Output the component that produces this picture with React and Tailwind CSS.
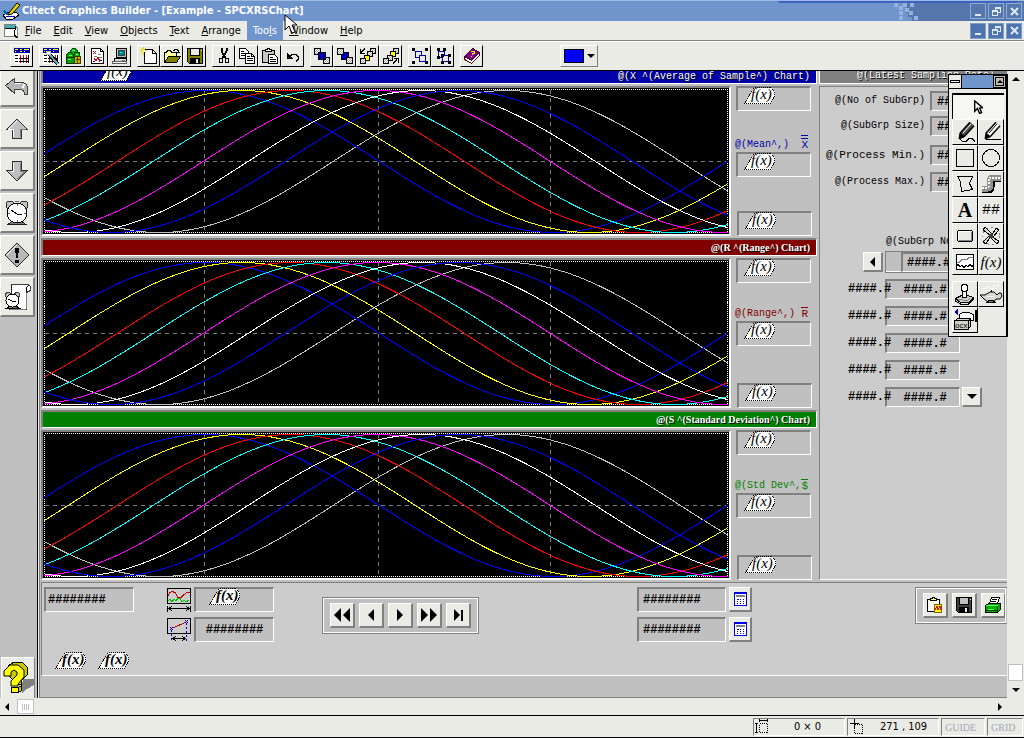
import React from "react";

const mono = "font-['Liberation_Mono',monospace]";
const ui = "font-['DejaVu_Sans_Condensed','DejaVu_Sans',sans-serif]";

const Icon = ({ w = 18, h = 18, children }) => (
  <svg
    width={w}
    height={h}
    viewBox={`0 0 ${w} ${h}`}
    shapeRendering="crispEdges"
    fill="none"
    stroke="#000"
    className="shrink-0"
    aria-hidden="true"
  >
    {children}
  </svg>
);

/* ---------- toolbar icons ---------- */

const TableIcon = ({ wrench }) => (
  <Icon>
    <rect x="1" y="1" width="16" height="16" fill="#fff" stroke="none" />
    <rect x="1" y="1" width="16" height="5" fill="#0000a8" stroke="none" />
    <path d="M2 2.5h3M7 2.5h2M7 4.5h2M11 2.5h5M2 4.5h1M11 4.5h1" stroke="#ff0" />
    <path d="M2 8.5h3M2 11.5h3M2 14.5h3" stroke="#000" />
    <path d="M7.500 8v8M10.500 8v8M13.500 8v8" stroke="#f00000" />
    <path d="M6 11.5h10M6 14.5h10M15.500 8v8" stroke="#000" />
    {wrench && (
      <>
        <path d="M7 7l9 10" stroke="#000" strokeWidth="4" />
        <path d="M7 7l9 10" stroke="#5fa8b8" strokeWidth="2" />
        <path d="M4.500 4.500h4v3h-4z" fill="#fff" stroke="#c0c0c0" />
      </>
    )}
  </Icon>
);

const SymbolsIcon = () => (
  <Icon>
    <circle cx="9" cy="5" r="3.5" fill="#00b000" stroke="#004000" />
    <circle cx="5" cy="9" r="3.5" fill="#00a000" stroke="#004000" />
    <circle cx="12" cy="8" r="3" fill="#00c000" stroke="#004000" />
    <path d="M1.5 10.5h8v6h-8z" fill="#00a000" stroke="#003000" />
    <path d="M9.5 9.5h6v7h-6z" fill="#c8b400" stroke="#403800" />
    <path d="M11 12.5h4M12.5 10v6" stroke="#404000" />
    <path d="M7 3.5h3M4 8.5h3M3 12.5h3M11 7.5h2" stroke="#60ff60" />
  </Icon>
);

const ReportIcon = () => (
  <Icon>
    <path d="M3.5 1.5h9l3 3v12h-12z" fill="#fff" />
    <path d="M12.5 1.5v3h3" />
    <path d="M5 4l3 3M8 4l-3 3" stroke="#e00000" />
    <path d="M10 7.5h3M6 9.5h3M11 10.5h3" stroke="#808080" />
    <path d="M6 11l2 3 2-4 2 5" stroke="#e00000" />
    <path d="M5 14.5h2M12 13.5h2" stroke="#0000a8" />
  </Icon>
);

const ComputerIcon = () => (
  <Icon>
    <path d="M5.5 1.5h10v9h-10z" fill="#c0c0c0" />
    <rect x="7.500" y="3.500" width="6" height="5" fill="#008080" stroke="#404040" />
    <path d="M9 5.5h2" stroke="#0ff" />
    <path d="M3.5 11.5h12v3h-12z" fill="#d8d8d8" />
    <path d="M1.5 14.5h14v2h-14z" fill="#fff" stroke="#606060" />
    <path d="M11 13h3" stroke="#808080" />
  </Icon>
);

const NewIcon = () => (
  <Icon>
    <path d="M4.5 2.5h8l4 4v10h-12z" fill="#fff" />
    <path d="M12.5 2.5v4h4" />
    <path d="M3.5 0v8M0 3.5h7M1 1l5 5M6 1l-5 5" stroke="#e8d800" />
    <path d="M3 3h1v1h-1z" stroke="#fff" />
  </Icon>
);

const OpenIcon = () => (
  <Icon>
    <path d="M1.5 14.5v-9h2l1-2h3l1 2h5v4" fill="#ffffa0" />
    <path d="M1.5 15.5l4-6h12l-4 6z" fill="#808000" />
    <path d="M10 3.5h1v-1h3v1h1v2M13 5.5h4M15.5 6v-2" />
  </Icon>
);

const SaveIcon = ({ body = "#808000" }) => (
  <Icon>
    <path d="M1.5 1.5h15v15h-13l-2-2z" fill={body} />
    <rect x="4.5" y="1.5" width="9" height="7" fill={body === "#808000" ? "#ebebe5" : "#c0c0c0"} />
    <rect x="4.5" y="11.5" width="9" height="5" fill="#000" />
    <rect x="10" y="12" width="2" height="4" fill="#ebebe5" stroke="none" />
    <path d="M14.5 3.5h1" stroke="#fff" />
  </Icon>
);

const CutIcon = () => (
  <Icon>
    <path d="M6.500 1v3l1 2 1 2 2 3M11.500 1v3l-1 2-1 2-2 3" strokeWidth="2" />
    <rect x="4.5" y="11.5" width="3" height="4" rx="1" />
    <rect x="10.5" y="11.5" width="3" height="4" rx="1" />
  </Icon>
);

const CopyIcon = () => (
  <Icon>
    <path d="M1.5 1.5h6l3 3v7h-9z" fill="#fff" />
    <path d="M3 4.5h3M3 6.5h5M3 8.5h5" />
    <path d="M7.5 6.5h6l3 3v7h-9z" fill="#fff" />
    <path d="M13.5 6.5v3h3M9 9.5h3M9 11.5h6M9 13.5h6" />
  </Icon>
);

const PasteIcon = () => (
  <Icon>
    <path d="M1.5 3.5h12v12h-12z" fill="#c8c8c0" />
    <path d="M4.5 4.5v-2h2v-1h2v1h2v2z" fill="#fff" />
    <path d="M7.5 7.5h6l3 3v6h-9z" fill="#fff" />
    <path d="M9 10.5h3M9 12.5h6M9 14.5h6" />
  </Icon>
);

const UndoIcon = () => (
  <Icon>
    <path d="M3 6v6h6z" fill="#000" stroke="none" />
    <path d="M6 9.500l2-2h4l2 2v3l-2 2" />
  </Icon>
);

const checker = (
  <defs>
    <pattern id="dither" width="2" height="2" patternUnits="userSpaceOnUse">
      <rect width="2" height="2" fill="#fff" stroke="none" />
      <path d="M0 0h1v1H0zM1 1h1v1H1z" fill="#a8a8a8" stroke="none" />
    </pattern>
  </defs>
);

const FrontIcon = ({ back }) => (
  <Icon>
    {checker}
    {back && <rect x="5.5" y="5.5" width="7" height="7" fill="#0000c0" />}
    <rect x="1.5" y="1.5" width="6" height="6" fill="url(#dither)" />
    <rect x="10.5" y="10.5" width="6" height="6" fill="url(#dither)" />
    {!back && <rect x="5.5" y="5.5" width="7" height="7" fill="#0000c0" />}
  </Icon>
);

const StepIcon = ({ forward }) => (
  <Icon>
    <rect x="11.5" y="1.5" width="5" height="5" fill="url(#dither)" />
    <rect x="8.5" y="4.5" width="5" height="5" fill={forward ? "#ff0" : "url(#dither)"} />
    <rect x="5.5" y="8.5" width="5" height="5" fill={forward ? "url(#dither)" : "#ff0"} />
    <rect x="1.5" y="11.5" width="5" height="5" fill="url(#dither)" />
    {forward ? (
      <path d="M11 16.5l4-4M12 11.5h4v4" />
    ) : (
      <path d="M6 1.5l-4 4M1.5 2v4h4" />
    )}
  </Icon>
);

const GroupIcon = ({ split }) => (
  <Icon>
    <path d="M4.5 4.5h6v6h-6z" stroke="#0000a0" />
    <path d="M8.5 8.5h6v6h-6z" stroke="#0000a0" fill="#ebebe5" />
    {split ? (
      <path
        d="M3 1h3v3H3zM9 1h3v3H9zM3 9h3v3H3zM14 7h3v3h-3zM7 14h3v3H7zM14 14h3v3h-3zM7 7h3v3H7z"
        fill="#000"
        stroke="none"
      />
    ) : (
      <path
        d="M1 1h3v3H1zM14 1h3v3h-3zM1 14h3v3H1zM14 14h3v3h-3z"
        fill="#000"
        stroke="none"
      />
    )}
  </Icon>
);

const BookIcon = () => (
  <Icon>
    <path d="M1.5 9.5v3l7 4 8-8v-3l-8 8z" fill="#fff" stroke="#600000" />
    <path d="M1.5 9.5l8-8 7 4-8 8z" fill="#800080" stroke="#400040" />
    <path d="M8 4.500h3v2h-2v1M8.500 9v1" stroke="#ff0" />
  </Icon>
);

/* ---------- left bar icons ---------- */

const BackIcon = () => (
  <Icon w={26} h={22}>
    <path
      d="M1.500 10.500l9-7v4h7q6 0 6 6v6h-3q0-5-5-5h-5v4z"
      fill="#b8b8b8"
      stroke="#404040"
    />
    <path d="M11 8.500h6" stroke="#fff" />
    <path d="M19 13l1-4" stroke="#fff" strokeWidth="2" />
  </Icon>
);

const ArrowIcon = ({ down }) => (
  <Icon w={26} h={24}>
    {down ? (
      <path d="M8.5 2.5h9v9h6l-10.500 10.500l-10.500-10.500h6z" fill="#c0c0c0" stroke="#303030" />
    ) : (
      <path d="M13 2l10.500 10.500h-6v9h-9v-9h-6z" fill="#c0c0c0" stroke="#303030" />
    )}
    <path d={down ? "M9.5 4v8h-3" : "M13 4l-8 8h4v8"} stroke="#fff" />
    <path d={down ? "M16.5 4v8h5l-8 8" : "M16.5 20v-8h5"} stroke="#808080" />
  </Icon>
);

const ClockIcon = () => (
  <Icon w={26} h={26}>
    <circle cx="6" cy="5" r="4" fill="#c0c0c0" stroke="#303030" />
    <circle cx="20" cy="5" r="4" fill="#c0c0c0" stroke="#303030" />
    <path d="M4 24.500l4-3h10l4 3z" fill="#808080" stroke="#202020" />
    <circle cx="13" cy="13" r="10" fill="#fff" stroke="#000" />
    <path d="M7 10l6 4h5" />
    <path d="M13 4v2M13 20v2M4 13h2M20 13h2M11 1h4" stroke="#606060" />
  </Icon>
);

const AlertIcon = () => (
  <Icon w={26} h={26}>
    <path d="M13 1l12 12-12 12L1 13z" fill="#b8b8b8" stroke="#303030" />
    <path d="M13 3L3 13" stroke="#fff" />
    <path d="M11 6h4l-1 10h-2zM11 18h4v3h-4z" fill="#000" stroke="none" />
  </Icon>
);

const AlarmPageIcon = () => (
  <Icon w={28} h={28}>
    <path d="M8.5 1.5h17l2 2v4l-4 2v17h-17v-3h2z" fill="#fff" stroke="#404040" />
    <path d="M8.5 2v24" strokeDasharray="1 1" />
    <path d="M23.500 9v-4l2-3" />
    <path d="M7 26.500h16M23.500 10v16" stroke="#808080" />
    <circle cx="5" cy="12" r="2.500" fill="#c0c0c0" stroke="#404040" />
    <circle cx="14" cy="12" r="2.500" fill="#c0c0c0" stroke="#404040" />
    <path d="M4 25l3-2h6l3 2z" fill="#808080" />
    <circle cx="9.500" cy="17.500" r="6.500" fill="#fff" />
    <path d="M5 16l4 2h4" />
  </Icon>
);

const HelpIcon = () => (
  <Icon w={32} h={34}>
    <path d="M21 18h11v6l-7 4-5 4v-8z" fill="#808080" stroke="none" />
    <path d="M6 5l6-4h8l5 5v8l-6 6v3h-4l-9-9z" fill="#c8c800" />
    <path
      d="M2 15v-5l6-6h8l6 5v7l-6 7v2h-7v-5l6-6v-3l-3-2-3 2v4z"
      fill="#ffff00"
      shapeRendering="auto"
    />
    <path d="M9.500 26.500h7v5h-7z" fill="#ffff00" />
    <path d="M16.500 26.500l3-2v5l-3 2z" fill="#c8c800" />
  </Icon>
);

/* ---------- palette icons ---------- */

const Pencil = ({ dark }) => (
  <>
    <path d="M8 14L18 3" stroke="#000" strokeWidth="7" shapeRendering="auto" />
    <path
      d="M8.500 13.500L18 3"
      stroke={dark ? "#505050" : "#fff"}
      strokeWidth="4"
      shapeRendering="auto"
    />
    <path d="M9 12L17 3" stroke={dark ? "#fff" : "#000"} shapeRendering="auto" />
    <path d="M5 18l1-6 4 4z" fill="#000" shapeRendering="auto" />
  </>
);

const FreehandIcon = () => (
  <Icon w={22} h={22}>
    <Pencil dark />
    <path d="M6 18.500l3 2h3l3-3h3l3 3" />
  </Icon>
);

const LineIcon = () => (
  <Icon w={22} h={22}>
    <Pencil />
    <path d="M6 18.500h15" />
  </Icon>
);

const RectIcon = () => (
  <Icon w={22} h={22}>
    <path d="M2.500 2.500h17v17h-17z" />
  </Icon>
);

const EllipseIcon = () => (
  <Icon w={22} h={22}>
    <circle cx="11" cy="11" r="8.500" />
  </Icon>
);

const PolygonIcon = () => (
  <Icon w={22} h={22}>
    <path d="M3.500 3.500h15l-3 7 3 6-11 2-1-10z" />
  </Icon>
);

const PipeIcon = () => (
  <Icon w={22} h={22}>
    <path d="M2 16.500h7q2 0 2-3v-5q0-3 3-3h7" stroke="#000" strokeWidth="7" />
    <path d="M2 15.500h6q2 0 2-3v-5q0-3 3-3h8" stroke="#909090" strokeWidth="6" />
    <path d="M2 14.500h5q2 0 2-3v-4q0-3 3-3h9" stroke="#fff" strokeWidth="2" strokeDasharray="2 1" />
  </Icon>
);

const ButtonIcon = () => (
  <Icon w={22} h={22}>
    <rect x="3.500" y="5.500" width="15" height="11" rx="2" fill="#ebebe5" />
    <path d="M5 15.500h13M17.500 7v8" stroke="#808080" />
    <path d="M5 6.500h12M4.500 7v8" stroke="#fff" />
  </Icon>
);

const FanIcon = () => (
  <Icon w={22} h={22}>
    <circle cx="11" cy="11" r="8.500" stroke="#808080" strokeDasharray="2 3" />
    <g fill="#dcdcd6">
      <path d="M10 10L3 5l2-3 7 7zM12 10l4-7 3 2-6 7zM12 12l7 4-2 3-6-6zM10 12l-4 7-3-2 6-6z" />
    </g>
    <rect x="9" y="9" width="4" height="4" fill="#404040" stroke="none" />
  </Icon>
);

const TrendIcon = () => (
  <Icon w={22} h={22}>
    <rect x="2.500" y="3.500" width="17" height="15" fill="#fff" />
    <path d="M3 11.500h2l3-3h5l2-2h4" stroke="#808080" />
    <path d="M3 14.500l1-1 2 2 2-1 2 2 2-2 2 1 2-2 2 2 1-1" />
  </Icon>
);

const StampIcon = () => (
  <Icon w={22} h={22}>
    <path d="M1.500 15.500l6-3h6l6 2-5 5h-8z" fill="#d0d0c8" />
    <path d="M1.500 16v2l5 3h8l5-5v-2" />
    <path d="M8.500 7.500h4v7h-4z" fill="#fff" />
    <circle cx="10.500" cy="5" r="3.500" fill="#fff" />
    <path d="M5 16.500l8 1 3-2" stroke="#808080" />
  </Icon>
);

const LampIcon = () => (
  <Icon w={24} h={22}>
    <path d="M4 5.500h3v-2h4v2h3v-3h6M13 5.500h6" stroke="#fff" strokeDasharray="2 1" />
    <path
      d="M1 12l5 0 5-3h4l3 3 2-2h2l1 3-2 3h-4l-2 3h-6l-4-3z"
      fill="#d8d8d0"
      shapeRendering="auto"
    />
    <path d="M8 19.500h8l-2-2h-4z" fill="#808080" />
    <path d="M8 13.500h7" stroke="#fff" />
    <path d="M12.500 7v2" />
  </Icon>
);

const OcxIcon = () => (
  <Icon w={24} h={24}>
    <path d="M5 1v7L1 4z" fill="#0000c0" stroke="none" />
    <path d="M6.500 6.500l3-2h6l5 2v6h-4l-5-2-5 1z" fill="#fff" />
    <path d="M22.500 2v12" strokeWidth="2" />
    <path d="M1.500 13.500l3-3h13l-3 3M14.500 21.500l3-3v-8" fill="#d0d0c8" />
    <path d="M1.500 12.500h14v9h-14z" fill="#d0d0c8" />
    <text
      x="2"
      y="20"
      fontSize="8"
      fill="#000"
      stroke="none"
      fontFamily="Liberation Sans, sans-serif"
    >
      ocx
    </text>
  </Icon>
);

const Fx = () => (
  <svg width="32" height="17" viewBox="0 0 32 17" className="block shrink-0" role="img" aria-label="f(x)">
    <path
      d="M10.500 .5h16l4 4v5l-4 7H.5l3-5z"
      fill="#fff"
      stroke="#000"
      strokeDasharray="1 1"
      shapeRendering="crispEdges"
    />
    <text
      x="7"
      y="12"
      fontSize="15"
      fontStyle="italic"
      fontFamily="Liberation Serif, serif"
    >
      f(x)
    </text>
  </svg>
);

const Tri = ({ dir = "left", size = 5 }) => {
  const d = {
    left: "M7 0v14L0 7z",
    right: "M0 0v14l7-7z",
    up: "M0 7h14L7 0z",
    down: "M0 0h14L7 7z",
  }[dir];
  const side = dir === "left" || dir === "right";
  return (
    <svg
      width={side ? size : size * 2}
      height={side ? size * 2 : size}
      viewBox={side ? "0 0 7 14" : "0 0 14 7"}
      aria-hidden="true"
    >
      <path d={d} />
    </svg>
  );
};

/* ---------- window chrome ---------- */

const WindowGlyph = ({ kind }) => (
  <svg width="11" height="11" viewBox="0 0 11 11" fill="none" stroke="#dfe9f7" shapeRendering="crispEdges" aria-hidden="true">
    {kind === "Minimize" && <path d="M2 9h6" strokeWidth="2" />}
    {kind === "Restore" && <path d="M4.500 4V1.500h5v5H7M4 2.500h6M1.500 4.500h5v5h-5zM1 5.500h6" />}
    {kind === "Close" && <path d="M2 2l7 7M9 2L2 9" strokeWidth="2" shapeRendering="auto" />}
  </svg>
);

const WindowButtons = ({ solid }) => (
  <div className="flex gap-[2px]">
    {["Minimize", "Restore", "Close"].map((kind) => (
      <button
        key={kind}
        aria-label={kind}
        className={`flex size-4 items-center justify-center border ${
          solid ? "border-[#7d9ccc] bg-[#4f74ad]" : "border-[#8fabd8]"
        }`}
      >
        <WindowGlyph kind={kind} />
      </button>
    ))}
  </div>
);

const TitleBar = () => (
  <header className="relative flex h-[21px] shrink-0 items-center overflow-hidden border-t border-[#9db9e4] bg-[#7095cc] text-white">
    <div className="px-[2px]">
      <Icon w={18} h={18}>
        <path d="M1 13l5-3 9 1 2 2-6 4H4z" fill="#fff" />
        <path d="M4 14h9" stroke="#0000c0" />
        <path d="M7 11l8-10 3 2-8 9-4 1z" fill="#f0d800" shapeRendering="auto" />
        <path d="M2 9l4 4" stroke="#0060a0" strokeWidth="2" />
      </Icon>
    </div>
    <h1 className={`${ui} flex-1 text-[11px] font-bold whitespace-nowrap`}>
      Citect Graphics Builder - [Example - SPCXRSChart]
    </h1>
    <svg width="24" height="20" viewBox="0 0 24 20" className="shrink-0" aria-hidden="true">
      <path d="M12 0h12v20h-6v-4h-4v-4h-2z" fill="#5577ac" />
      <path
        d="M0 2h4v4H0zM5 5h4v4H5zM9 2h4v4H9zM16 2h4v4h-4zM5 10h4v4H5zM15 10h4v4h-4zM5 15h4v4H5zM11 7h4v4h-4zM20 15h4v4h-4z"
        fill="#95b2de"
      />
    </svg>
    <div className="flex h-full items-center bg-[#5577ac] pr-[2px] pl-[52px]">
      <WindowButtons />
    </div>
    <div className="absolute -top-[3px] right-[5px] h-[5px] w-[242px] rounded-b-sm border-b-2 border-[#3c63c0] bg-[#6f9cf0]" />
  </header>
);

const menus = [
  ["", "F", "ile"],
  ["", "E", "dit"],
  ["", "V", "iew"],
  ["", "O", "bjects"],
  ["", "T", "ext"],
  ["", "A", "rrange"],
  ["Too", "l", "s"],
  ["", "W", "indow"],
  ["", "H", "elp"],
];

const MenuBar = () => (
  <nav className="flex h-5 shrink-0 items-center border-b border-[#808080] pr-[2px] pl-[3px]">
    <Icon w={16} h={16}>
      <path d="M1.500 1.500h11v2l2 1v10l-4-1h-9z" fill="#fff" stroke="#808080" />
      <path d="M2 2h11v3H2z" fill="#40b0b0" stroke="none" />
      <path d="M12.500 3l-1 9 3 3M2 5.500h10" />
    </Icon>
    <div className="flex flex-1">
      {menus.map(([pre, key, post]) => (
        <button
          key={key + post}
          className={`${ui} h-[19px] px-[6px] text-[11px] leading-[19px] ${
            pre ? "bg-[#7095cc] text-white" : ""
          }`}
        >
          {pre}
          <u>{key}</u>
          {post}
        </button>
      ))}
    </div>
    <WindowButtons solid />
  </nav>
);

const toolGroups = [
  [["Template", <TableIcon />]],
  [
    ["Properties", <TableIcon wrench />],
    ["Symbols", <SymbolsIcon />],
    ["Reports", <ReportIcon />],
    ["Runtime", <ComputerIcon />],
  ],
  [
    ["New", <NewIcon />],
    ["Open", <OpenIcon />],
    ["Save", <SaveIcon />],
  ],
  [
    ["Cut", <CutIcon />],
    ["Copy", <CopyIcon />],
    ["Paste", <PasteIcon />],
    ["Undo", <UndoIcon />],
  ],
  [
    ["Bring to front", <FrontIcon />],
    ["Send to back", <FrontIcon back />],
    ["Send backwards", <StepIcon />],
    ["Bring forwards", <StepIcon forward />],
  ],
  [
    ["Group", <GroupIcon />],
    ["Ungroup", <GroupIcon split />],
  ],
  [["Help book", <BookIcon />]],
];

const ToolBar = () => (
  <div className="flex shrink-0 items-center border-t border-b border-t-white border-b-black py-[3px] pl-[10px]">
    <div className="flex gap-[6px]">
      {toolGroups.map((group) => (
        <div key={group[0][0]} className="flex">
          {group.map(([name, icon]) => (
            <button
              key={name}
              aria-label={name}
              className="flex h-[22px] w-[23px] items-center justify-center border border-t-white border-r-black border-b-black border-l-white"
            >
              {icon}
            </button>
          ))}
        </div>
      ))}
    </div>
    <button
      aria-label="Fill colour"
      className="ml-[77px] flex h-[22px] w-[38px] items-center gap-[3px] border border-t-white border-r-[#808080] border-b-[#808080] border-l-white pl-[3px]"
    >
      <span className="h-[14px] w-5 border border-black bg-[#0000ff]" />
      <Tri dir="down" size={4} />
    </button>
  </div>
);

const sideTools = [
  ["Back", <BackIcon />],
  ["Page up", <ArrowIcon />],
  ["Page down", <ArrowIcon down />],
  ["Alarms", <ClockIcon />],
  ["Alerts", <AlertIcon />],
  ["Alarm summary", <AlarmPageIcon />],
];

const SideBar = () => (
  <aside className="flex w-[38px] shrink-0 flex-col overflow-hidden border-r border-black bg-[#c0c0c0]">
    {sideTools.map(([name, icon], i) => (
      <button
        key={name}
        aria-label={name}
        className={`mb-[2px] flex w-[35px] shrink-0 items-center justify-center border border-t-white border-r-2 border-b-2 border-r-[#808080] border-b-[#808080] border-l-white bg-[#ebebe5] ${
          i === 0 ? "h-[36px] border-t-0 pb-1" : "h-[40px]"
        }`}
      >
        {icon}
      </button>
    ))}
    <button
      aria-label="Help"
      className="mt-auto ml-px flex h-[41px] w-[34px] items-center justify-center border border-t-white border-r-[#808080] border-b-0 border-l-white bg-[#ebebe5]"
    >
      <HelpIcon />
    </button>
  </aside>
);

/* ---------- chart page ---------- */

const curves = [
  ["#c0c0c0", 290],
  ["#0000ff", -11],
  ["#ffff00", 25],
  ["#ff0000", 74],
  ["#00ffff", 110],
  ["#ff00ff", 160],
  ["#ffffff", 205],
  ["#0000ff", 242],
];

const curvePath = (start) => {
  const points = [];
  for (let x = 1; x <= 685; x += 3) {
    const y = 73.5 - 71 * Math.sin((2 * Math.PI * (x - start)) / 695);
    points.push(`${x} ${y.toFixed(1)}`);
  }
  return `M${points.join("L")}`;
};

const Chart = () => (
  <div className="min-w-0 flex-1 border-2 border-t-[#808080] border-r-white border-b-white border-l-[#808080] bg-black">
    <svg
      width="100%"
      height="146"
      viewBox="0 0 686 146"
      preserveAspectRatio="none"
      fill="none"
      shapeRendering="crispEdges"
      className="block"
      aria-hidden="true"
    >
      <path
        d="M161.500 2v142M335.500 2v142M507.500 2v142M2 73.500h682"
        stroke="#808080"
        strokeDasharray="4 4"
      />
      <rect x="1.500" y="1.500" width="683" height="143" stroke="#fff" strokeDasharray="1 1" />
      {curves.map(([color, start]) => (
        <path key={start} d={curvePath(start)} stroke={color} />
      ))}
    </svg>
  </div>
);

const Field = ({ className = "", children }) => (
  <div
    className={`flex shrink-0 border-t-2 border-r border-b border-l-2 border-t-[#808080] border-r-white border-b-white border-l-[#808080] bg-[#c0c0c0] ${className}`}
  >
    {children}
  </div>
);

const FxField = ({ className = "" }) => (
  <Field className={`h-[25px] w-[75px] pl-[6px] ${className}`}>
    <div className="-mt-px">
      <Fx />
    </div>
  </Field>
);

const Stats = ({ label, mark, color, bar, tight }) => (
  <div className="flex w-[82px] shrink-0 flex-col pl-[1px]">
    <FxField />
    <div
      className={`${mono} ${color} flex h-[14px] w-[72px] items-end justify-between text-[10px] leading-[14px] whitespace-nowrap ${
        tight ? "mt-[24px]" : "mt-[27px]"
      }`}
    >
      <span className="-ml-px">{label}</span>
      <span className={`${bar} border-current text-[11px] leading-[13px]`}>{mark}</span>
    </div>
    <FxField />
    <FxField className={`ml-px ${tight ? "mt-[37px]" : "mt-[34px]"}`} />
  </div>
);

const ChartRow = (props) => (
  <div className="flex gap-[4px]">
    <Chart />
    <Stats {...props} />
  </div>
);

const ChartTitle = ({ bg, children }) => (
  <h2
    className={`${bg} flex h-[18px] items-center justify-end border-t-2 border-r border-b border-l-2 border-t-[#808080] border-r-white border-b-white border-l-[#808080] pr-[6px] font-['Liberation_Serif',serif] text-[10px] font-bold whitespace-nowrap text-white [text-shadow:1px_1px_0_#000]`}
  >
    {children}
  </h2>
);

const samples = [
  ["@(No of SubGrp)", "text-[10px]", "mt-[4px]"],
  ["@(SubGrp Size)", "text-[10px]", "mt-[5px]"],
  ["@(Process Min.)", "text-[11px]", "mt-[9px]"],
  ["@(Process Max.)", "text-[10px]", "mt-[7px]"],
];

const SamplePanel = () => (
  <section className="flex w-[188px] shrink-0 flex-col">
    <h2
      className={`${mono} h-[13px] border-b border-l border-white bg-[#808080] pr-3 text-right text-[10px] leading-[10px] text-white [text-shadow:1px_1px_0_#000]`}
    >
      @(Latest Sampling Data)
    </h2>
    <div
      className={`${mono} mt-[2px] flex-1 border-t border-b border-l border-t-[#808080] border-b-white border-l-[#808080] bg-[#cccccc]`}
    >
      {samples.map(([label, size, gap]) => (
        <div key={label} className={`flex items-center justify-end gap-[5px] ${gap}`}>
          <span className={`${size} leading-5 whitespace-nowrap`}>{label}</span>
          <Field className="h-5 w-[77px] items-center overflow-hidden pl-[5px] text-[12px] font-bold">
            ####
          </Field>
        </div>
      ))}
      <div className="mt-[43px] pl-[66px] text-[10px] leading-[14px]">@(SubGrp No.)</div>
      <div className="mt-[2px] flex items-center gap-[2px] pl-[43px]">
        <button
          aria-label="Previous subgroup"
          className="flex size-5 items-center justify-center border-t border-r-2 border-b-2 border-l border-t-white border-r-[#808080] border-b-[#808080] border-l-white bg-[#ebebe5]"
        >
          <Tri size={5} />
        </button>
        <div className="flex h-[22px] flex-1 border-t border-b-2 border-l border-white bg-[#c0c0c0] pl-[15px] outline-1 -outline-offset-1 outline-[#808080]">
          <Field className="h-5 w-[75px] items-center pl-1 text-[12px] font-bold">####.#</Field>
        </div>
      </div>
      <div className="mt-[6px] flex flex-col gap-[7px]">
        {[0, 1, 2, 3, 4].map((row) => (
          <div key={row} className="flex items-center text-[12px] leading-5 font-bold">
            <span className="z-10 -mr-[6px] pl-[28px]">####.#</span>
            <Field className="h-5 w-[75px] items-center justify-center pl-1">####.#</Field>
            {row === 4 && (
              <button
                aria-label="Next subgroup"
                className="ml-[2px] flex size-5 items-center justify-center border-t border-r-2 border-b-2 border-l border-t-white border-r-[#808080] border-b-[#808080] border-l-white bg-[#ebebe5]"
              >
                <Tri dir="down" size={5} />
              </button>
            )}
          </div>
        ))}
      </div>
    </div>
  </section>
);

const Key = ({ label, className = "w-[25px]", children }) => (
  <button
    aria-label={label}
    className={`flex h-[25px] items-center justify-center border-t border-r-2 border-b-2 border-l border-t-white border-r-[#808080] border-b-[#808080] border-l-white bg-[#ebebe5] ${className}`}
  >
    {children}
  </button>
);

const CalendarIcon = () => (
  <Icon w={13} h={14}>
    <rect x=".5" y=".5" width="12" height="13" fill="#fff" stroke="#0000e0" />
    <path d="M0 1h13" stroke="#0000e0" strokeWidth="2" />
    <path d="M2.500 3.500h8v1h-8z" stroke="#808080" fill="#fff" />
    <path
      d="M3 7h2M6 7h1M9 7h1M3 9.500h1M6 9.500h1M9 9.500h1M3 11.500h1M6 11.500h1M9 11.500h1"
      stroke="#0000e0"
    />
  </Icon>
);

const SpanIcon = () => (
  <Icon w={24} h={25}>
    <path d="M.5 1.500h23v15H.5z" />
    <path d="M1 8.500l2-3 2-1 3 1 3 5 3 0 3-3 3-2h3" stroke="#c80000" />
    <path d="M1 13.500l2-1 2 2 2-2 2 1 2-2 2 0 2 3 2-1 2 1 3-1" stroke="#00c000" />
    <path d="M.5 19v6M23.500 19v6M1 21.500h22M5 19l-3 2.500 3 2.500M19 19l3 2.500-3 2.500" />
  </Icon>
);

const OffsetIcon = () => (
  <Icon w={24} h={25}>
    <path d="M.5 1.500h23v15H.5z" />
    <path d="M6 11l13-6" stroke="#c80000" />
    <path d="M3 10l3 3M6 10l-3 3M18 3l3 3M21 3l-3 3" stroke="#0000c8" />
    <path d="M4.500 13v12M19.500 6v19" stroke="#0000c8" strokeDasharray="2 2" />
    <path d="M6 21.500h12M9 19l-3 2.500 3 2.500M15 19l3 2.500-3 2.500" />
  </Icon>
);

const ClipTrendIcon = () => (
  <Icon>
    <path d="M1.5 3.5h12v12h-12z" fill="#fff" />
    <path d="M4.500 4.500v-2h2v-1h2v1h2v2z" fill="#ffff80" />
    <path d="M8.500 8.500h7v8h-7z" fill="#ff0" stroke="#806000" />
    <path d="M9 14l2-4 1 4 2-4 1 4" stroke="#f00000" />
  </Icon>
);

const PrintIcon = () => (
  <Icon>
    <path d="M5.500 7.500l2-6h8l-2 6z" fill="#fff" />
    <path d="M8 3.500h5M7 5.500h5" />
    <path d="M1.500 9.500l3-2h12v6l-3 3h-12z" fill="#00b000" />
    <path d="M2 9.500h12M4 13.500h6" stroke="#60ff60" />
    <path d="M13.500 10v6M2 14.500h11" stroke="#004000" />
  </Icon>
);

const KeyGroup = ({ className, children }) => (
  <div
    className={`flex h-[37px] items-center gap-[4px] border border-[#808080] bg-[#c0c0c0] pl-[7px] outline-1 -outline-offset-2 outline-white ${className}`}
  >
    {children}
  </div>
);

const ControlPanel = () => (
  <section
    className={`${mono} flex h-[94px] shrink-0 items-start border-t border-b border-l border-t-[#808080] border-b-white border-l-[#808080] bg-[#cccccc] pt-1 pl-[2px] text-[12px] font-bold`}
  >
    <div className="w-[90px] shrink-0">
      <Field className="h-[25px] items-center pl-[2px]">########</Field>
      <div className="mt-[40px] flex gap-[11px] pl-[11px]">
        <Fx />
        <Fx />
      </div>
    </div>
    <div className="ml-[33px] flex shrink-0 flex-col gap-[5px]">
      <div className="flex gap-[3px]">
        <SpanIcon />
        <Field className="h-[25px] w-20 pl-[13px]">
          <div className="-mt-px">
            <Fx />
          </div>
        </Field>
      </div>
      <div className="flex gap-[3px]">
        <OffsetIcon />
        <Field className="h-[25px] w-20 items-center justify-center">########</Field>
      </div>
    </div>
    <KeyGroup className="mt-[10px] ml-[48px] w-[157px]">
      <Key label="Fast rewind">
        <Tri size={7} />
        <span className="w-[2px]" />
        <Tri size={7} />
      </Key>
      <Key label="Rewind">
        <Tri size={6} />
      </Key>
      <Key label="Forward">
        <Tri dir="right" size={6} />
      </Key>
      <Key label="Fast forward">
        <Tri dir="right" size={7} />
        <span className="w-[2px]" />
        <Tri dir="right" size={7} />
      </Key>
      <Key label="Latest">
        <Tri dir="right" size={6} />
        <span className="ml-px h-[11px] w-[2px] bg-black" />
      </Key>
    </KeyGroup>
    <div className="mr-auto ml-[158px] flex flex-col gap-[5px]">
      {["Start date", "End date"].map((name) => (
        <div key={name} className="flex gap-[3px]">
          <Field className="h-[25px] w-[89px] items-center pl-[4px]">########</Field>
          <Key label={name} className="w-[23px]">
            <CalendarIcon />
          </Key>
        </div>
      ))}
    </div>
    <KeyGroup className="w-[92px] shrink-0 border-r-0">
      <Key label="Copy trend">
        <ClipTrendIcon />
      </Key>
      <Key label="Save trend">
        <SaveIcon body="#404040" />
      </Key>
      <Key label="Print trend">
        <PrintIcon />
      </Key>
    </KeyGroup>
  </section>
);

const Canvas = () => (
  <main className="ml-px flex min-w-0 flex-1 flex-col overflow-hidden border-b border-l border-[#808080] bg-[#c0c0c0] pl-px">
    <div className="flex gap-[2px]">
      <section className="flex min-w-0 flex-1 flex-col gap-[2px]">
        <div className="flex h-[13px] items-start justify-between overflow-hidden border-r border-b border-l-2 border-r-white border-b-white border-l-[#808080] bg-[#0000a8] pr-[6px] pl-[57px] text-white">
          <div className="-mt-[7px] text-black">
            <Fx />
          </div>
          <h2 className={`${mono} text-[10px] leading-[11px] whitespace-nowrap [text-shadow:1px_1px_0_#000]`}>
            @(X ^(Average of Sample^) Chart)
          </h2>
        </div>
        <ChartRow
          label="@(Mean^,)"
          mark="X"
          color="text-[#0000a8]"
          bar="border-t-4 border-double"
        />
        <ChartTitle bg="bg-[#800000]">@(R ^(Range^) Chart)</ChartTitle>
        <ChartRow label="@(Range^,)" mark="R" color="text-[#800000]" bar="border-t" tight />
        <ChartTitle bg="bg-[#008000]">@(S ^(Standard Deviation^) Chart)</ChartTitle>
        <ChartRow label="@(Std Dev^," mark="$" color="text-[#008000]" bar="border-t" tight />
      </section>
      <SamplePanel />
    </div>
    <div className="mt-[2px]">
      <ControlPanel />
    </div>
  </main>
);

/* ---------- floating tool palette ---------- */

const paletteTools = [
  ["Free hand", <FreehandIcon />],
  ["Straight line", <LineIcon />],
  ["Rectangle", <RectIcon />],
  ["Ellipse", <EllipseIcon />],
  ["Polygon", <PolygonIcon />],
  ["Pipe", <PipeIcon />],
  ["Text", <span className="font-['Liberation_Serif',serif] text-[20px] font-bold">A</span>],
  ["Number", <span className="font-['Liberation_Mono',monospace] text-[15px]">##</span>],
  ["Button", <ButtonIcon />],
  ["Symbol set", <FanIcon />],
  ["Trend", <TrendIcon />],
  ["Cicode object", <span className="font-['Liberation_Serif',serif] text-[15px] italic">f(x)</span>],
];

const PaletteButton = ({ label, children }) => (
  <button
    aria-label={label}
    className="flex size-[26px] items-center justify-center overflow-hidden border border-t-white border-r-black border-b-black border-l-white leading-none"
  >
    {children}
  </button>
);

const Pointer = ({ w, h, line = 1 }) => (
  <svg
    width={w}
    height={h}
    viewBox="0 0 13 21"
    fill="#fff"
    stroke="#000"
    strokeWidth={line}
    aria-hidden="true"
  >
    <path d="M1 1v15l4-4 3 7 3-1-3-7h5z" />
  </svg>
);

const Palette = () => (
  <div className="absolute top-[3px] right-4 z-20 w-[60px] border border-r-2 border-black bg-[#ebebe5]">
    <div className="flex h-[14px] border-b border-black">
      <button aria-label="Palette menu" className="flex w-[13px] items-center justify-center border-r border-black">
        <span className="h-[3px] w-[10px] border border-black bg-white" />
      </button>
      <div className="flex-1 bg-[#7095cc]" />
      <button
        aria-label="Roll up"
        className="flex w-[13px] items-center justify-center border border-black bg-[#c0c0b8]"
      >
        <span className="flex size-[9px] items-center justify-center border border-black">
          <Tri dir="up" size={3} />
        </span>
      </button>
    </div>
    <div className="px-[3px] pt-[4px] pb-[3px]">
      <button
        aria-label="Select"
        className="flex h-[26px] w-[52px] items-center justify-center border-t-2 border-l border-black bg-[#f6f6f2]"
      >
        <Pointer w={9} h={15} line={2} />
      </button>
      <div className="grid grid-cols-[26px_26px]">
        {paletteTools.map(([name, icon]) => (
          <PaletteButton key={name} label={name}>
            {icon}
          </PaletteButton>
        ))}
      </div>
      <div className="mt-[6px] grid grid-cols-[26px_26px]">
        <PaletteButton label="Paste symbol">
          <StampIcon />
        </PaletteButton>
        <PaletteButton label="Genie">
          <LampIcon />
        </PaletteButton>
        <PaletteButton label="ActiveX">
          <OcxIcon />
        </PaletteButton>
      </div>
    </div>
  </div>
);

/* ---------- scroll bars and status ---------- */

const VerticalScroll = () => (
  <div className="flex w-[17px] shrink-0 flex-col items-center justify-between pt-[6px] pb-[6px]">
    <button aria-label="Scroll up" className="flex">
      <Tri dir="up" size={4} />
    </button>
    <div className="flex flex-col items-center gap-[7px]">
      <div className="h-[17px] w-[15px] border border-[#c0c0c0] bg-white" />
      <button aria-label="Scroll down" className="flex">
        <Tri dir="down" size={4} />
      </button>
    </div>
  </div>
);

const HorizontalScroll = () => (
  <div className="flex h-[17px] shrink-0 items-center justify-between pr-[22px] pl-[5px]">
    <div className="flex items-center gap-2">
      <button aria-label="Scroll left">
        <Tri size={4} />
      </button>
      <div className="flex h-[15px] w-[17px] items-center justify-center gap-px border border-[#c0c0c0] bg-white">
        {[0, 1, 2, 3].map((i) => (
          <span key={i} className="h-[6px] w-px bg-[#c0c0c0]" />
        ))}
      </div>
    </div>
    <button aria-label="Scroll right">
      <Tri dir="right" size={4} />
    </button>
  </div>
);

const StatusCell = ({ className, children }) => (
  <div
    className={`flex h-[18px] items-center border border-t-[#808080] border-r-white border-b-white border-l-[#808080] ${className}`}
  >
    {children}
  </div>
);

const StatusBar = () => (
  <footer className="flex shrink-0 items-center justify-end gap-[2px] border-t border-b border-black px-px pt-[2px] pb-px">
    <StatusCell className={`${ui} w-[92px] pl-px text-[11px]`}>
      <Icon w={16} h={16}>
        <path d="M4.500 4.500h8v9h-8z" strokeDasharray="1 1" />
        <path d="M4 1.500h9M4.500 0v3M12.500 0v3M1.500 4v10M0 4.500h3M0 13.500h3" />
      </Icon>
      <span className="flex-1 text-center">0 × 0</span>
    </StatusCell>
    <StatusCell className={`${ui} w-[92px] pl-px text-[11px]`}>
      <Icon w={16} h={16}>
        <path d="M5.500 0v9M1 4.500h9" />
        <path d="M5.500 5.500h8v9h-8z" strokeDasharray="1 1" />
      </Icon>
      <span className="flex-1 pl-[4px] text-center">271 , 109</span>
    </StatusCell>
    <StatusCell className="w-[44px] pl-[3px] font-['Liberation_Serif',serif] text-[10px] text-[#a0a8b8]">
      GUIDE
    </StatusCell>
    <StatusCell className="w-[36px] pl-[3px] font-['Liberation_Serif',serif] text-[10px] text-[#a0a8b8]">
      GRID
    </StatusCell>
  </footer>
);

export default function App() {
  return (
    <div className="relative flex h-screen flex-col overflow-hidden bg-[#ebebe5] text-black">
      <TitleBar />
      <MenuBar />
      <ToolBar />
      <div className="relative flex min-h-0 flex-1">
        <SideBar />
        <Canvas />
        <VerticalScroll />
        <Palette />
      </div>
      <HorizontalScroll />
      <StatusBar />
      <div className="pointer-events-none absolute top-[14px] left-[284px] z-30">
        <Pointer w={13} h={21} />
      </div>
    </div>
  );
}
